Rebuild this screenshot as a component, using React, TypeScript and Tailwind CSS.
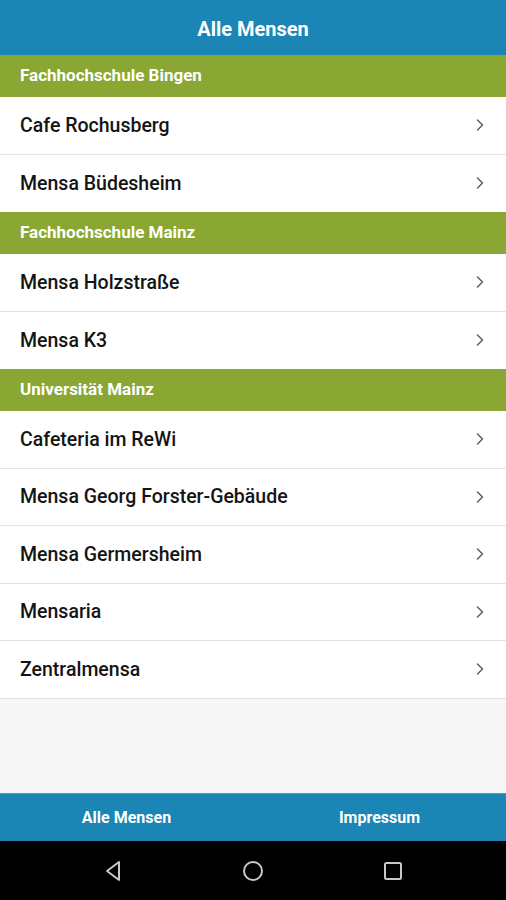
import { ChevronRight } from "lucide-react";

const sections = [
  { name: "Fachhochschule Bingen", items: ["Cafe Rochusberg", "Mensa Büdesheim"] },
  { name: "Fachhochschule Mainz", items: ["Mensa Holzstraße", "Mensa K3"] },
  {
    name: "Universität Mainz",
    items: [
      "Cafeteria im ReWi",
      "Mensa Georg Forster-Gebäude",
      "Mensa Germersheim",
      "Mensaria",
      "Zentralmensa",
    ],
  },
];

export default function App() {
  return (
    <div className="h-[900px] w-full flex flex-col bg-[#f7f7f7] font-['Roboto',sans-serif]">
      {/* title bar */}
      <div className="h-[55px] shrink-0 bg-[#1b85b5] flex items-center justify-center pt-[3px]">
        <span className="text-white font-bold text-[20px]">Alle Mensen</span>
      </div>

      <div className="flex-1">
        {sections.map((s) => (
          <div key={s.name}>
            <div className="h-[42px] bg-[#89a732] flex items-center px-5">
              <span className="text-white font-bold text-[17px]">{s.name}</span>
            </div>
            {s.items.map((item, i) => (
              <div
                key={item}
                className={`h-[57.5px] bg-white flex items-center justify-between pl-5 pr-4 ${
                  i < s.items.length - 1 || s.name === "Universität Mainz" ? "border-b border-[#e3e3e3]" : ""
                }`}
              >
                <span className="text-[19.5px] text-[#141414] font-medium">{item}</span>
                <ChevronRight size={20} strokeWidth={1.8} className="text-[#5f5f5f]" />
              </div>
            ))}
          </div>
        ))}
      </div>

      {/* tab bar */}
      <div className="h-[48px] shrink-0 bg-[#1b85b5] grid grid-cols-2 items-center border-t border-[#4aa3cc]">
        <span className="text-center text-white font-bold text-[16px]">Alle Mensen</span>
        <span className="text-center text-white font-bold text-[16px]">Impressum</span>
      </div>

      {/* android nav */}
      <div className="h-[59px] shrink-0 bg-black flex items-center justify-center gap-[118px]">
        <svg width="22" height="22" viewBox="0 0 22 22" fill="none" stroke="#c8c8c8" strokeWidth="2">
          <path d="M17 2 L5 11 L17 20 Z" strokeLinejoin="round" />
        </svg>
        <svg width="22" height="22" viewBox="0 0 22 22" fill="none" stroke="#c8c8c8" strokeWidth="2">
          <circle cx="11" cy="11" r="9" />
        </svg>
        <svg width="22" height="22" viewBox="0 0 22 22" fill="none" stroke="#c8c8c8" strokeWidth="2">
          <rect x="3" y="3" width="16" height="16" rx="1.5" />
        </svg>
      </div>
    </div>
  );
}
